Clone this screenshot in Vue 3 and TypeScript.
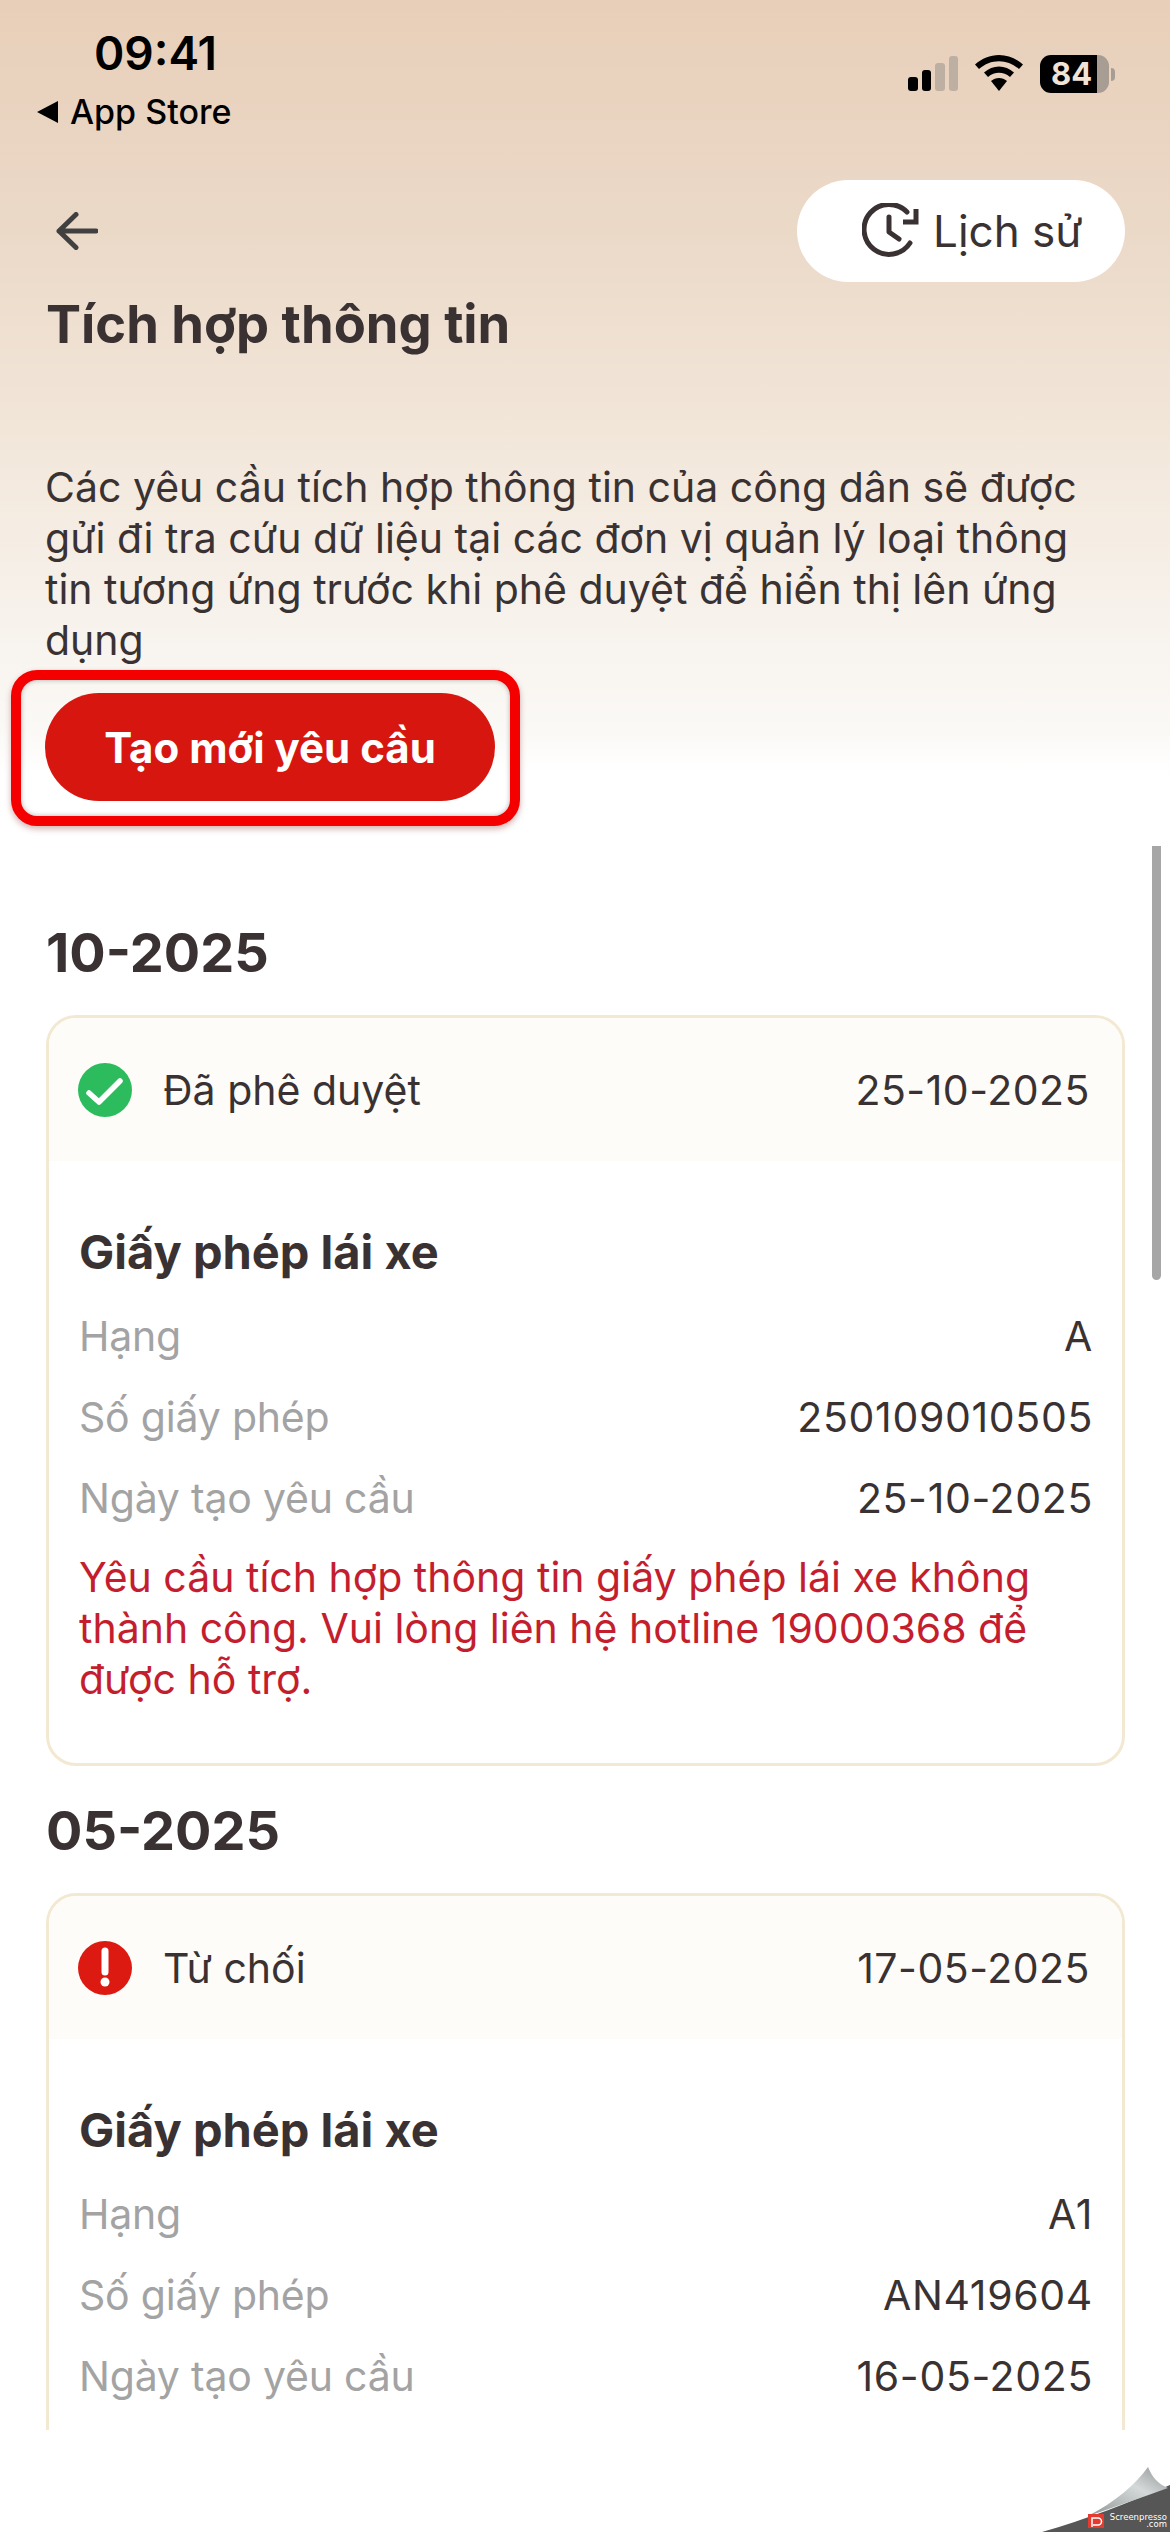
<template>
  <div class="page">
    <header class="top">
      <div class="status">
        <div class="status-left">
          <div class="time">09:41</div>
          <div class="back-app"><span class="tri"></span>App Store</div>
        </div>
        <div class="status-right">
          <div class="signal">
            <i class="on" style="height: 14px"></i>
            <i class="on" style="height: 21px"></i>
            <i style="height: 28px"></i>
            <i style="height: 35px"></i>
          </div>
          <svg class="wifi" width="48" height="36" viewBox="0 0 48 36">
            <path d="M24 0C15 0 7 3.500 0 9.500L4 14C10 9 16.500 6.300 24 6.300S38 9 44 14L48 9.500C41 3.500 33 0 24 0Z" fill="#000" />
            <path d="M24 11.500C18.500 11.500 13.500 13.500 9 17.500L13 22C16.500 19 20 17.800 24 17.800S31.500 19 35 22L39 17.500C34.500 13.500 29.500 11.500 24 11.500Z" fill="#000" />
            <path d="M24 23C21 23 18.500 24 16 26L24 36L32 26C29.500 24 27 23 24 23Z" fill="#000" />
          </svg>
          <div class="battery">
            <div class="battery-body"><span>84</span></div>
            <div class="battery-nub"></div>
          </div>
        </div>
      </div>

      <div class="nav">
        <svg class="back" width="42" height="38" viewBox="0 0 42 38">
          <path d="M20 2.500L3 19L20 35.500M3 19H40" fill="none" stroke="#404040" stroke-width="5" stroke-linecap="round" stroke-linejoin="round" />
        </svg>
        <div class="history">
          <svg width="58" height="56" viewBox="0 0 58 56">
            <path d="M45 9A25 25 0 1 0 48 40" fill="none" stroke="#3a3232" stroke-width="5" stroke-linecap="round" />
            <path d="M27 14V29L37 36" fill="none" stroke="#3a3232" stroke-width="5" stroke-linecap="round" stroke-linejoin="round" />
            <path d="M54 6V19H41" fill="none" stroke="#3a3232" stroke-width="5" stroke-linejoin="miter" />
          </svg>
          <span>Lịch sử</span>
        </div>
      </div>

      <h1 class="title">Tích hợp thông tin</h1>
      <p class="desc">Các yêu cầu tích hợp thông tin của công dân sẽ được gửi đi tra cứu dữ liệu tại các đơn vị quản lý loại thông tin tương ứng trước khi phê duyệt để hiển thị lên ứng dụng</p>

      <div class="create-wrap">
        <button class="create">Tạo mới yêu cầu</button>
      </div>
    </header>

    <main class="list">
      <section v-for="group in groups" :key="group.month" class="group">
        <h2 class="month">{{ group.month }}</h2>
        <div class="card">
          <div class="card-head">
            <svg v-if="group.approved" width="54" height="54" viewBox="0 0 54 54">
              <circle cx="27" cy="27" r="27" fill="#2cbb5d" />
              <path d="M11 30L21 39L42 18" fill="none" stroke="#fff" stroke-width="5.500" stroke-linecap="round" stroke-linejoin="round" />
            </svg>
            <svg v-else width="54" height="54" viewBox="0 0 54 54">
              <circle cx="27" cy="27" r="27" fill="#dc1a12" />
              <path d="M27 10V31" fill="none" stroke="#fff" stroke-width="7" stroke-linecap="round" />
              <circle cx="27" cy="41" r="4.500" fill="#fff" />
            </svg>
            <span class="state">{{ group.state }}</span>
            <span class="head-date">{{ group.date }}</span>
          </div>
          <div class="card-body">
            <h3 class="doc">Giấy phép lái xe</h3>
            <div v-for="row in group.rows" :key="row.label" class="row">
              <span class="label">{{ row.label }}</span>
              <span class="value">{{ row.value }}</span>
            </div>
            <p v-if="group.error" class="error">{{ group.error }}</p>
          </div>
        </div>
      </section>
    </main>

    <div class="scrollbar"></div>

    <svg class="watermark" width="170" height="152" viewBox="0 0 170 152">
      <defs>
        <linearGradient id="curl" x1="0" y1="1" x2="1" y2="0">
          <stop offset="0" stop-color="#8f9696" />
          <stop offset="0.6" stop-color="#d5d9d9" />
          <stop offset="1" stop-color="#8d9292" />
        </linearGradient>
      </defs>
      <path d="M42 152C85 140 130 122 170 105V152Z" fill="#565656" />
      <path d="M88 136C115 122 135 105 148 87C152 97 158 104 168 108C140 118 112 128 88 136Z" fill="url(#curl)" />
      <rect x="88" y="134" width="16" height="14" fill="#e53a2f" />
      <path d="M92 147V138H98A3.500 3.500 0 0 1 98 145H93" fill="none" stroke="#fff" stroke-width="1.500" />
      <text x="167" y="140" text-anchor="end" class="wm-text">Screenpresso</text>
      <text x="167" y="147" text-anchor="end" class="wm-text">.com</text>
    </svg>
  </div>
</template>

<script setup lang="ts">
interface Row {
  label: string
  value: string
}

interface Group {
  month: string
  approved: boolean
  state: string
  date: string
  rows: Row[]
  error?: string
}

const groups: Group[] = [
  {
    month: '10-2025',
    approved: true,
    state: 'Đã phê duyệt',
    date: '25-10-2025',
    rows: [
      { label: 'Hạng', value: 'A' },
      { label: 'Số giấy phép', value: '250109010505' },
      { label: 'Ngày tạo yêu cầu', value: '25-10-2025' }
    ],
    error: 'Yêu cầu tích hợp thông tin giấy phép lái xe không thành công. Vui lòng liên hệ hotline 19000368 để được hỗ trợ.'
  },
  {
    month: '05-2025',
    approved: false,
    state: 'Từ chối',
    date: '17-05-2025',
    rows: [
      { label: 'Hạng', value: 'A1' },
      { label: 'Số giấy phép', value: 'AN419604' },
      { label: 'Ngày tạo yêu cầu', value: '16-05-2025' }
    ]
  }
]
</script>

<style>
html,
body {
  margin: 0;
  background: #fff;
}
</style>

<style scoped>
.page {
  position: relative;
  width: 1170px;
  height: 2532px;
  overflow: hidden;
  background: #fff;
  color: #3a3232;
  font-family: Inter, "Liberation Sans", sans-serif;
}

.top {
  height: 826px;
  box-sizing: border-box;
  background: linear-gradient(180deg, #e8cfb9 0, #ebd9c8 230px, #f2e6d9 425px, #f8f4ef 650px, #fbf9f6 730px, #fff 775px);
}

.status {
  height: 138px;
  display: flex;
  justify-content: space-between;
  box-sizing: border-box;
  padding: 28px 55px 0 37px;
}

.time {
  margin-left: 57px;
  font-size: 46px;
  line-height: 50px;
  font-weight: 600;
  color: #000;
}

.back-app {
  display: flex;
  align-items: center;
  gap: 12px;
  margin-top: 14px;
  font-size: 34px;
  line-height: 40px;
  font-weight: 500;
  color: #000;
}

.tri {
  width: 0;
  height: 0;
  border-style: solid;
  border-width: 11px 21px 11px 0;
  border-color: transparent #000 transparent transparent;
}

.status-right {
  display: flex;
  align-items: flex-start;
  padding-top: 27px;
}

.signal {
  display: flex;
  align-items: flex-end;
  gap: 4px;
  height: 35px;
  margin-right: 17px;
  margin-top: 1px;
}

.signal i {
  display: block;
  width: 9.500px;
  border-radius: 3px;
  background: #bdb0a3;
}

.signal i.on {
  background: #000;
}

.wifi {
  margin-right: 17px;
}

.battery {
  display: flex;
  align-items: center;
}

.battery-body {
  width: 69px;
  height: 38px;
  border-radius: 11px;
  background: linear-gradient(90deg, #000 83%, #a89d92 83%);
  font-size: 31px;
  font-weight: 700;
  line-height: 38px;
  color: #f1e4d6;
  text-indent: 11px;
}

.battery-nub {
  width: 4px;
  height: 13px;
  margin-left: 2px;
  border-radius: 0 4px 4px 0;
  background: #a89d92;
}

.nav {
  height: 102px;
  margin-top: 42px;
  display: flex;
  align-items: center;
  justify-content: space-between;
  padding: 0 45px 0 56px;
}

.history {
  width: 328px;
  height: 102px;
  box-sizing: border-box;
  padding-left: 65px;
  border-radius: 51px;
  background: #fff;
  display: flex;
  align-items: center;
  gap: 13px;
  font-size: 44px;
}

.title {
  margin: 11px 0 0 46px;
  font-size: 52.500px;
  line-height: 62px;
  font-weight: 700;
}

.desc {
  margin: 107px 45px 0;
  font-size: 41px;
  line-height: 51px;
}

.create-wrap {
  width: 509px;
  height: 156px;
  margin: 4px 0 0 11px;
  box-sizing: border-box;
  padding: 13px 15px 0 24px;
  border: 10px solid #f40000;
  border-radius: 26px;
  box-shadow: 0 3px 6px rgba(120, 0, 0, 0.3), inset 0 0 5px rgba(0, 0, 0, 0.3);
}

.create {
  width: 450px;
  height: 108px;
  border: none;
  border-radius: 54px;
  background: #d7170f;
  color: #fff;
  font: 700 42px Inter, "Liberation Sans", sans-serif;
}

.list {
  height: 1604px;
  overflow: hidden;
  box-sizing: border-box;
  padding: 96px 45px 0 46px;
}

.group + .group {
  margin-top: 34px;
}

.month {
  margin: 0;
  font-size: 54px;
  line-height: 62px;
  font-weight: 700;
}

.card {
  margin-top: 31px;
  min-height: 751px;
  box-sizing: border-box;
  border: 3px solid #f3e9d3;
  border-radius: 30px;
  overflow: hidden;
}

.card-head {
  height: 143px;
  box-sizing: border-box;
  padding: 0 32px 0 29px;
  background: #fefcf8;
  display: flex;
  align-items: center;
  font-size: 41px;
}

.state {
  margin-left: 31px;
  flex: 1;
}

.head-date {
  letter-spacing: 0.500px;
}

.card-body {
  padding: 63px 29px 58px 30px;
}

.doc {
  margin: 0;
  font-size: 47px;
  line-height: 56px;
  font-weight: 700;
}

.row {
  display: flex;
  justify-content: space-between;
  height: 81px;
  align-items: center;
  font-size: 41px;
}

.row:first-of-type {
  margin-top: 15px;
}

.label {
  color: #a3a3a3;
  letter-spacing: -0.200px;
}

.value {
  letter-spacing: 0.650px;
}

.error {
  margin: 14px 0 0;
  font-size: 41px;
  line-height: 51px;
  color: #c41e2e;
}

.scrollbar {
  position: absolute;
  left: 1152px;
  top: 846px;
  width: 9px;
  height: 434px;
  border-radius: 0 0 5px 5px;
  background: #a6a6a6;
}

.watermark {
  position: absolute;
  right: 0;
  bottom: 0;
}

.wm-text {
  font-family: "DejaVu Sans", sans-serif;
  font-size: 8.500px;
  fill: #fff;
}
</style>
